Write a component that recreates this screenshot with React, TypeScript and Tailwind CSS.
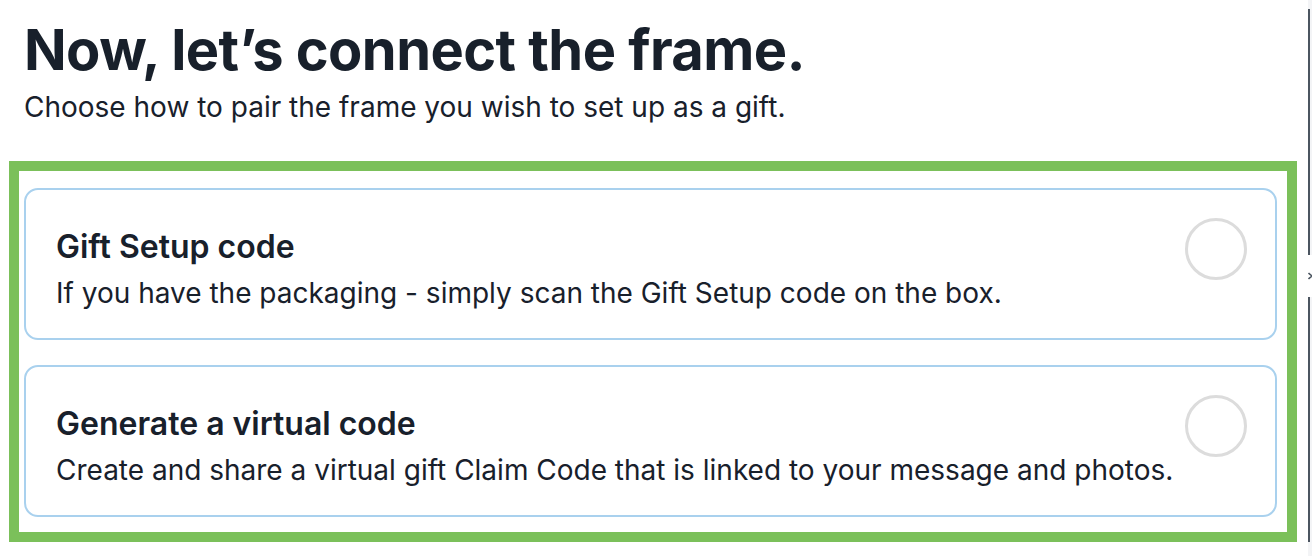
import { useState } from 'react';

interface Option {
  id: string;
  title: string;
  description: string;
}

const options: Option[] = [
  {
    id: 'setup',
    title: 'Gift Setup code',
    description: 'If you have the packaging - simply scan the Gift Setup code on the box.',
  },
  {
    id: 'virtual',
    title: 'Generate a virtual code',
    description: 'Create and share a virtual gift Claim Code that is linked to your message and photos.',
  },
];

export default function App() {
  const [selected, setSelected] = useState<string | null>(null);

  return (
    <div className="flex w-[1312px] h-[556px] bg-white text-[#18202b] font-['Inter',sans-serif] overflow-hidden">
      <div className="flex-1 min-w-0 pt-[18px] pl-[9px] pr-[11px]">
        <h1 className="pl-[15px] text-[56px] leading-[64px] font-bold tracking-[-0.01em]">
          Now, let’s connect the frame.
        </h1>
        <p className="pl-[15px] mt-[7px] text-[28px] leading-[36px]">
          Choose how to pair the frame you wish to set up as a gift.
        </p>

        <div className="mt-[36px] border-[10px] border-[#7bc05a] pt-[17px] pb-[15px] pl-[5px] pr-[10px] flex flex-col gap-[25px]">
          {options.map((option) => (
            <button
              key={option.id}
              onClick={() => setSelected(option.id)}
              className="h-[152px] flex items-start justify-between rounded-[14px] border-2 border-[#a9d1ee] pt-[28px] pl-[30px] pr-[28px] text-left"
            >
              <div className="pt-[9px]">
                <div className="text-[32px] leading-[40px] font-semibold">{option.title}</div>
                <div className="mt-[8px] text-[28px] leading-[36px]">{option.description}</div>
              </div>
              <span
                className={`w-[62px] h-[62px] shrink-0 rounded-full border-[3px] ${
                  selected === option.id ? 'border-[#7bc05a]' : 'border-[#dcdcdc]'
                }`}
              />
            </button>
          ))}
        </div>
      </div>

      {/* collapsed side panel edge */}
      <div className="w-[4px] shrink-0 flex flex-col bg-[#f3f4f6]">
        <div className="h-[9px] shrink-0" />
        <div className="h-[246px] w-[2px] shrink-0 bg-[#4b5560]" />
        <div className="h-[42px] shrink-0 flex items-center bg-white">
          <svg width="4" height="12" viewBox="0 0 4 12" fill="none">
            <path d="M0.5 3 L4 6 L0.5 9" stroke="#4b5560" strokeWidth="1.6" />
          </svg>
        </div>
        <div className="h-[245px] w-[2px] shrink-0 bg-[#4b5560]" />
      </div>
    </div>
  );
}
